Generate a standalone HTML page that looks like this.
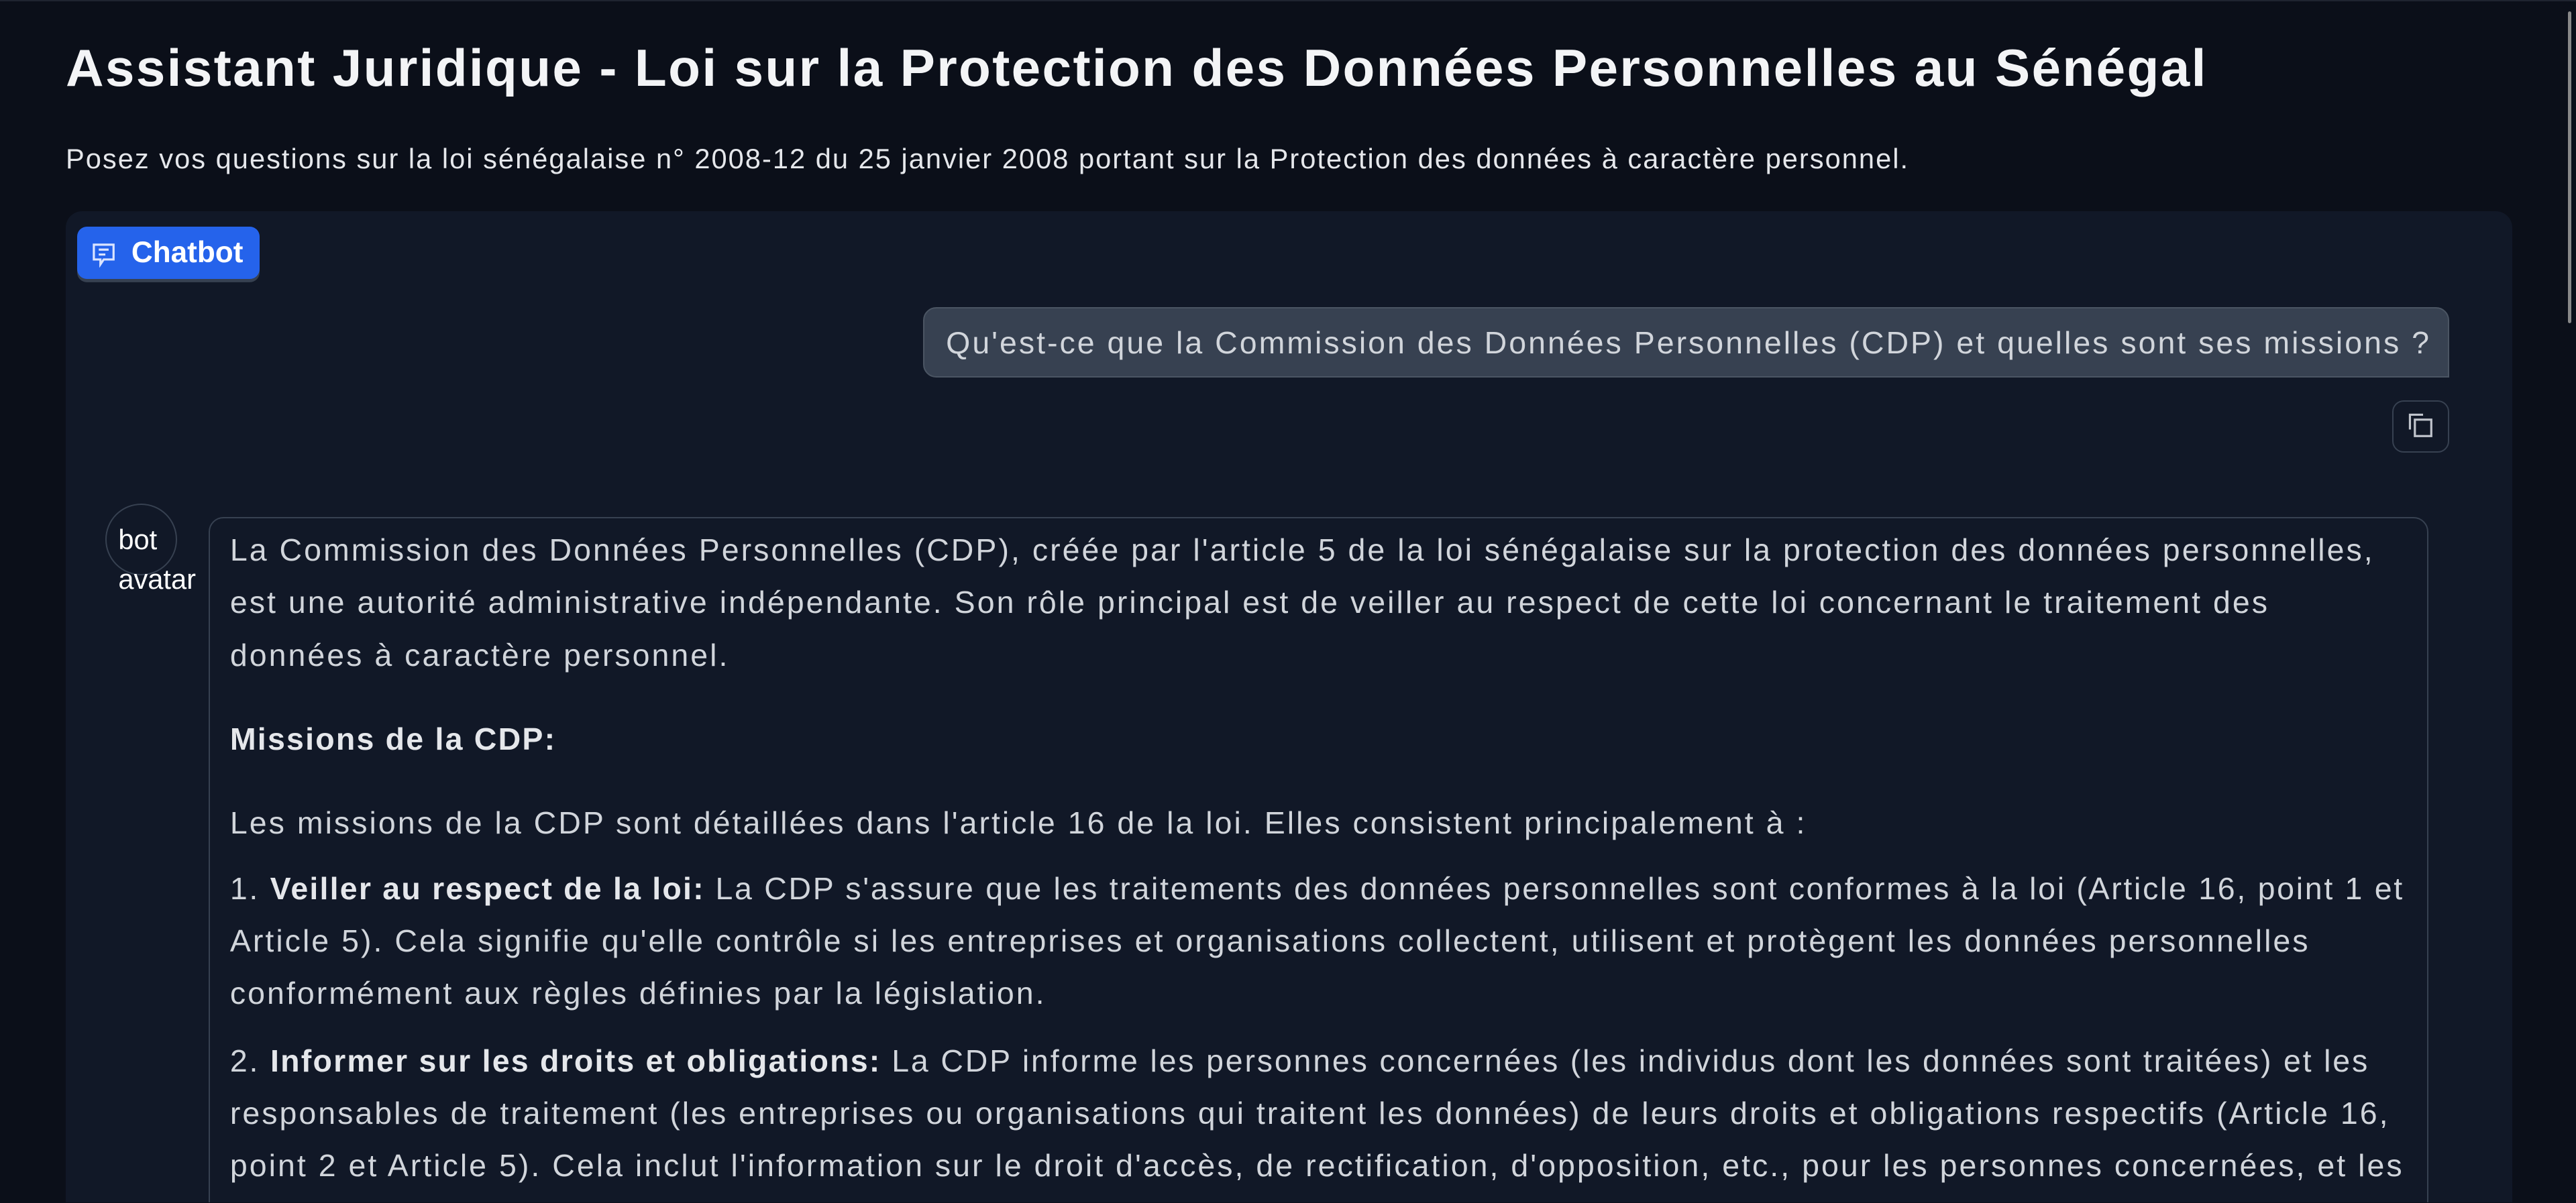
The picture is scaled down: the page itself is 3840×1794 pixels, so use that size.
<!DOCTYPE html>
<html><head><meta charset="utf-8"><style>
html,body{margin:0;padding:0;background:#0b0f19;overflow:hidden}
body{width:3840px;height:1794px;position:relative}
#w{zoom:2.449;width:1568px;height:732px;position:relative;overflow:hidden;font-family:"Liberation Sans",sans-serif;border-top:1px solid #1f2430;box-sizing:border-box}
.a{position:absolute;white-space:nowrap}
h1{position:absolute;left:40px;top:22px;margin:0;font-size:32px;font-weight:700;color:#f3f4f6;letter-spacing:0.95px}
.sub{left:40px;top:86px;font-size:17px;color:#e5e7eb;letter-spacing:0.82px}
.panel{position:absolute;left:40px;top:128px;width:1489px;height:604px;background:#111827;border-radius:10px 10px 0 0}
.badge{left:47px;top:137px;width:111px;height:32px;background:#2563eb;border-radius:6px;box-shadow:0 2px 0 #374151}
.badge span{position:absolute;left:33px;top:6px;color:#fff;font-weight:700;font-size:18px}
.ub{left:562px;top:186px;width:929px;height:43px;background:#374151;border:1px solid #4b5563;border-radius:8px 8px 0 8px;box-sizing:border-box}
.ub span{position:absolute;left:13px;top:10px;font-size:19px;color:#d1d5db;letter-spacing:1.22px}
.cp{left:1456px;top:243px;width:35px;height:32px;border:1px solid #374151;border-radius:7px;box-sizing:border-box}
.av{left:64px;top:306px;width:42px;height:42px;border:1px solid #374151;border-radius:50%}
.avt{font-size:17px;color:#fff}
.bb{left:127px;top:314px;width:1351px;height:430px;border:1px solid #374151;border-radius:9px;box-sizing:border-box}
.t{position:absolute;left:140px;font-size:19px;color:#d1d5db;white-space:nowrap;letter-spacing:1.23px}
.t b{color:#e5e7eb;letter-spacing:0.9px}
.sb{position:absolute;left:1563px;top:6px;width:2px;height:190px;background:#888;border-radius:1px}
</style></head><body><div id="w">
<h1>Assistant Juridique - Loi sur la Protection des Données Personnelles au Sénégal</h1>
<div class="a sub">Posez vos questions sur la loi sénégalaise n° 2008-12 du 25 janvier 2008 portant sur la Protection des données à caractère personnel.</div>
<div class="panel"></div>
<div class="a badge"><svg style="position:absolute;left:8px;top:9px" width="16" height="16" viewBox="0 0 16 16" fill="none" stroke="#dbe4ff" stroke-width="1.3"><path d="M2 2h12v9H8l-2 3v-3H2z"/><path d="M5 5h6M5 8h4"/></svg><span>Chatbot</span></div>
<div class="a ub"><span>Qu'est-ce que la Commission des Données Personnelles (CDP) et quelles sont ses missions ?</span></div>
<div class="a cp"><svg style="position:absolute;left:9px;top:7px" width="16" height="16" viewBox="0 0 16 16" fill="none" stroke="#c0c4cc" stroke-width="1.3"><path d="M1 10V1h8"/><rect x="4" y="4" width="10" height="10"/></svg></div>
<div class="a av"></div>
<div class="a avt" style="left:72px;top:318px">bot</div>
<div class="a avt" style="left:72px;top:342px">avatar</div>
<div class="a bb"></div>
<div class="t" style="top:323px">La Commission des Données Personnelles (CDP), créée par l'article 5 de la loi sénégalaise sur la protection des données personnelles,</div>
<div class="t" style="top:355px">est une autorité administrative indépendante. Son rôle principal est de veiller au respect de cette loi concernant le traitement des</div>
<div class="t" style="top:387px">données à caractère personnel.</div>
<div class="t" style="top:438px"><b>Missions de la CDP:</b></div>
<div class="t" style="top:489px">Les missions de la CDP sont détaillées dans l'article 16 de la loi. Elles consistent principalement à :</div>
<div class="t" style="top:529px;letter-spacing:1.1px">1. <b>Veiller au respect de la loi:</b> La CDP s'assure que les traitements des données personnelles sont conformes à la loi (Article 16, point 1 et</div>
<div class="t" style="top:561px">Article 5). Cela signifie qu'elle contrôle si les entreprises et organisations collectent, utilisent et protègent les données personnelles</div>
<div class="t" style="top:593px">conformément aux règles définies par la législation.</div>
<div class="t" style="top:634px;letter-spacing:1.15px">2. <b>Informer sur les droits et obligations:</b> La CDP informe les personnes concernées (les individus dont les données sont traitées) et les</div>
<div class="t" style="top:666px">responsables de traitement (les entreprises ou organisations qui traitent les données) de leurs droits et obligations respectifs (Article 16,</div>
<div class="t" style="top:698px">point 2 et Article 5). Cela inclut l'information sur le droit d'accès, de rectification, d'opposition, etc., pour les personnes concernées, et les</div>
<div class="sb"></div>
</div></body></html>
